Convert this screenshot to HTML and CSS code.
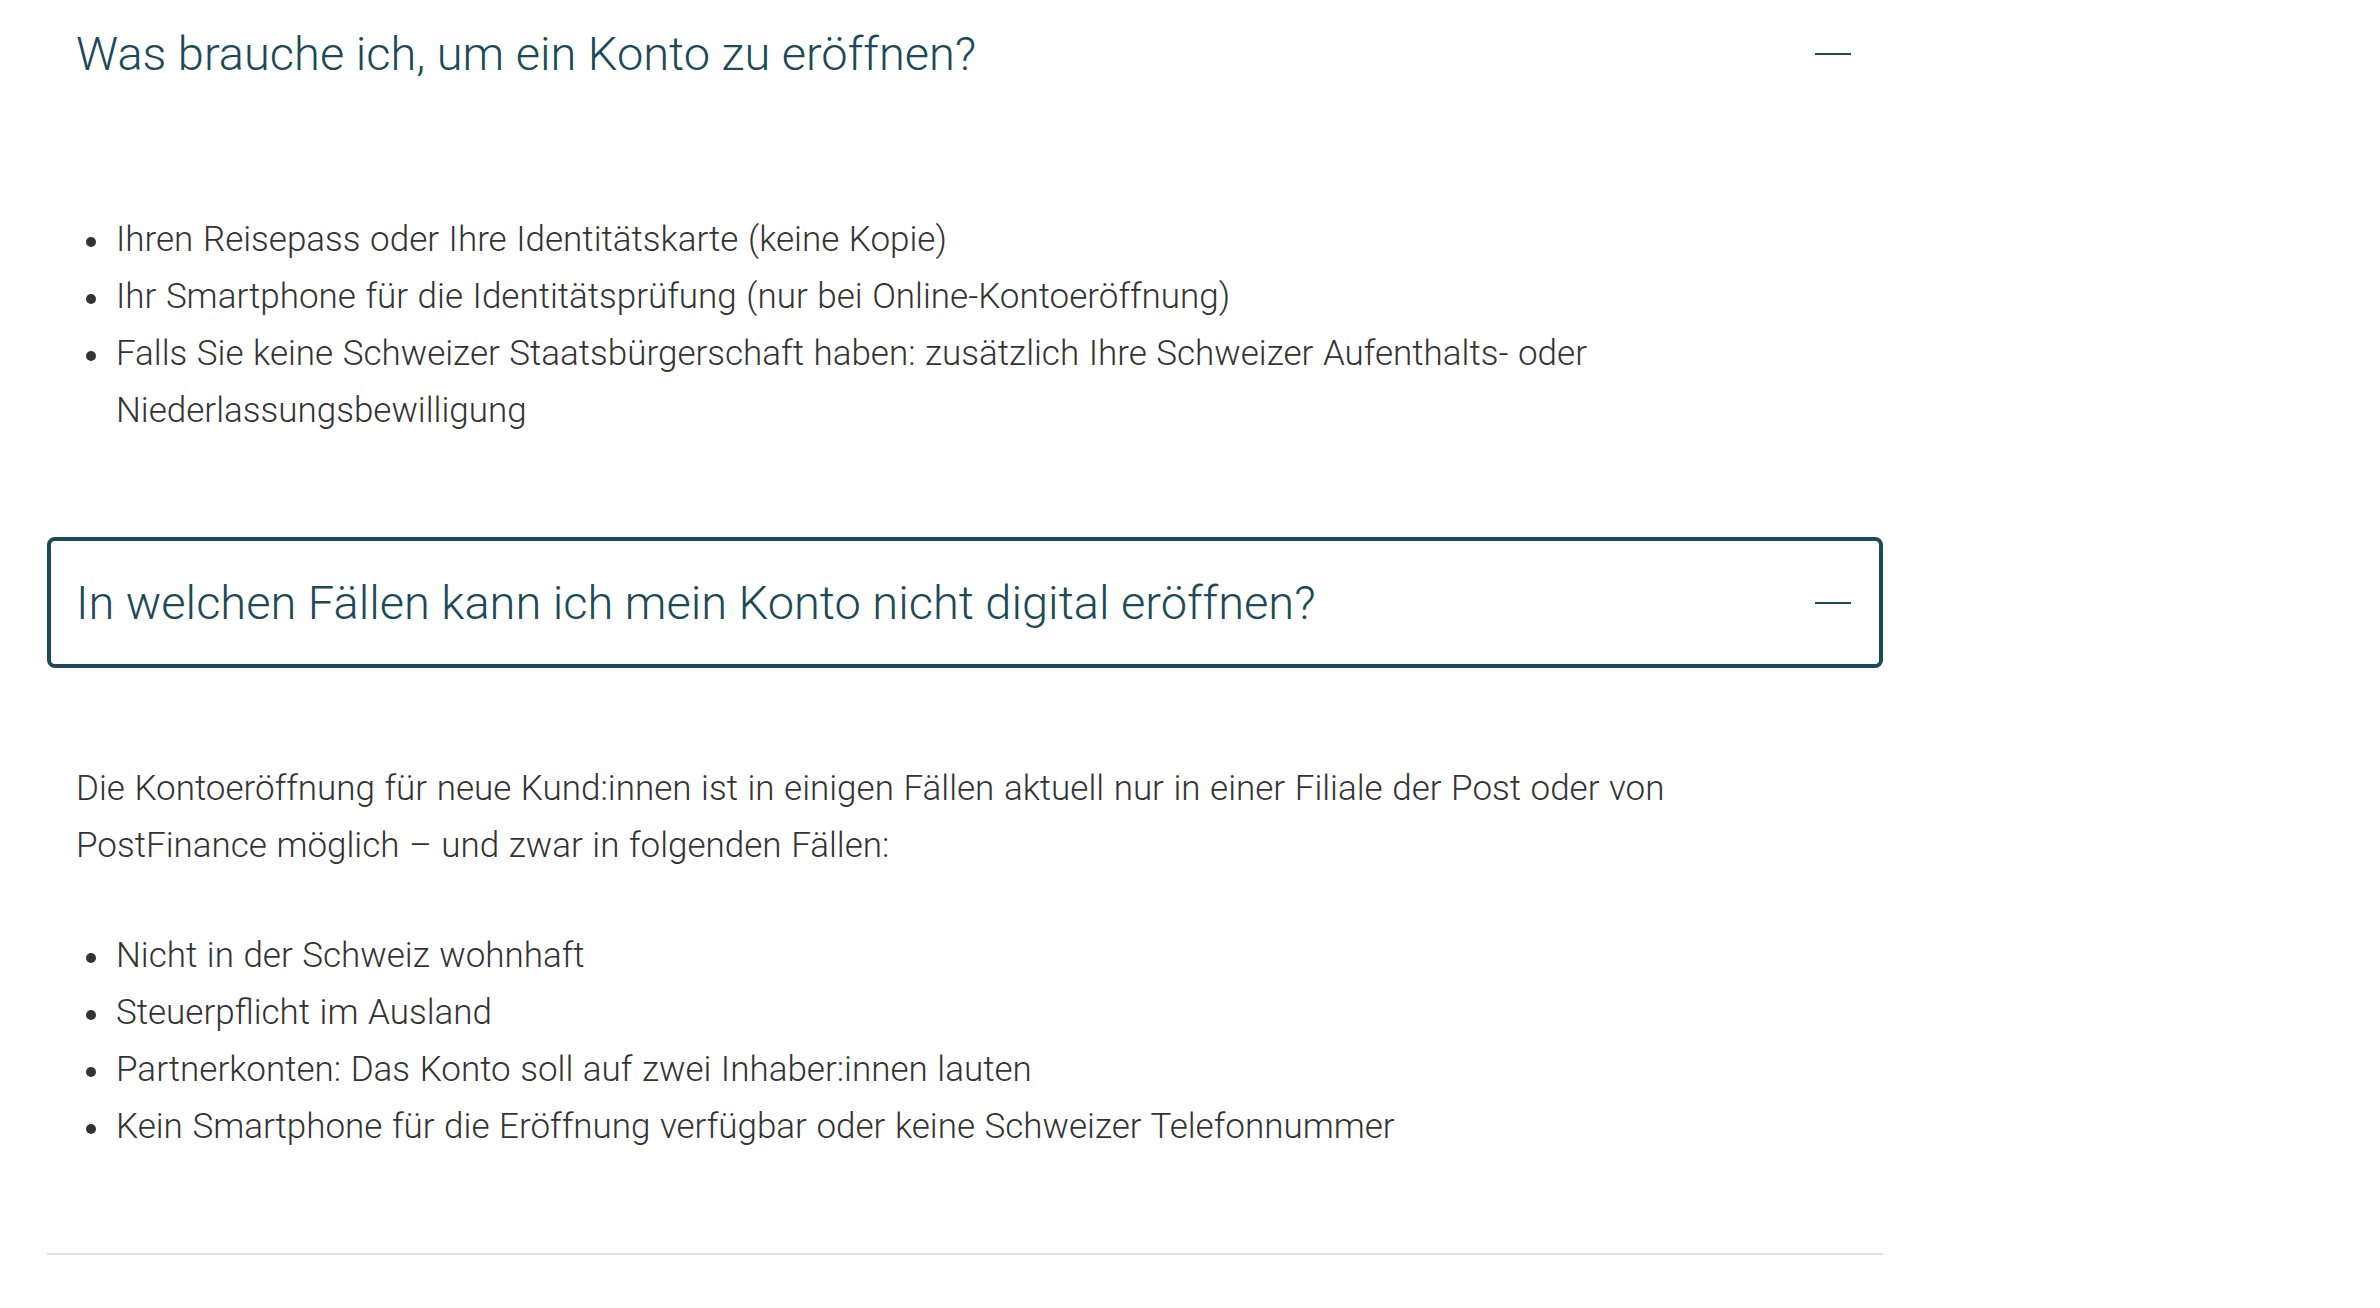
FILE: index.html
```html
<!DOCTYPE html>
<html lang="de">
<head>
  <meta charset="UTF-8" />
  <meta name="viewport" content="width=device-width, initial-scale=1.0"/>
  <title>Konto eröffnen – FAQ</title>
  <link rel="stylesheet" href="styles.css">
</head>
<body>
  <div class="faq">
    <div class="faq-item open">
      <button class="faq-head">
        <span class="faq-title">Was brauche ich, um ein Konto zu eröffnen?</span>
        <span class="faq-icon"></span>
      </button>
      <div class="faq-body">
        <ul>
          <li>Ihren Reisepass oder Ihre Identitätskarte (keine Kopie)</li>
          <li>Ihr Smartphone für die Identitätsprüfung (nur bei Online-Kontoeröffnung)</li>
          <li>Falls Sie keine Schweizer Staatsbürgerschaft haben: zusätzlich Ihre Schweizer Aufenthalts- oder Niederlassungsbewilligung</li>
        </ul>
      </div>
    </div>

    <div class="faq-item open">
      <button class="faq-head focused">
        <span class="faq-title">In welchen Fällen kann ich mein Konto nicht digital eröffnen?</span>
        <span class="faq-icon"></span>
      </button>
      <div class="faq-body">
        <p>Die Kontoeröffnung für neue Kund:innen ist in einigen Fällen aktuell nur in einer Filiale der Post oder von PostFinance möglich – und zwar in folgenden Fällen:</p>
        <ul>
          <li>Nicht in der Schweiz wohnhaft</li>
          <li>Steuerpflicht im Ausland</li>
          <li>Partnerkonten: Das Konto soll auf zwei Inhaber:innen lauten</li>
          <li>Kein Smartphone für die Eröffnung verfügbar oder keine Schweizer Telefonnummer</li>
        </ul>
      </div>
    </div>
  </div>
</body>
</html>
```

FILE: styles.css
```css
body {
  font-family: Roboto, "Liberation Sans", sans-serif;
  font-weight: 300;
  background: #fff;
  color: #333;
  margin: 0;
  padding: 0;
}
.faq {
  width: 1836px;
  margin: -12px 0 0 47px;
  border-bottom: 2px solid #d6e6e7;
}
.faq-head {
  display: flex;
  justify-content: space-between;
  align-items: center;
  width: 100%;
  height: 131px;
  padding: 0 28px 0 25px;
  border: 4px solid transparent;
  border-radius: 8px;
  background: none;
  font: inherit;
  color: #1c4a58;
  text-align: left;
  cursor: pointer;
}
.faq-head.focused {
  border-color: #1c4a58;
}
.faq-title {
  font-size: 47px;
  font-weight: 300;
}
.faq-icon {
  width: 36px;
  height: 2px;
  background: #1c4a58;
}
.faq-body {
  padding: 92px 29px 98px;
  font-size: 35px;
  line-height: 57px;
  word-spacing: 1px;
}
.faq-body p {
  margin: 0 0 53px;
  max-width: 1680px;
}
.faq-body ul {
  margin: 0;
  padding-left: 40px;
  max-width: 1640px;
  list-style: none;
}
.faq-body li {
  position: relative;
}
.faq-body li::before {
  content: "";
  position: absolute;
  left: -30px;
  top: 26px;
  width: 10px;
  height: 10px;
  border-radius: 50%;
  background: #333;
}
```
